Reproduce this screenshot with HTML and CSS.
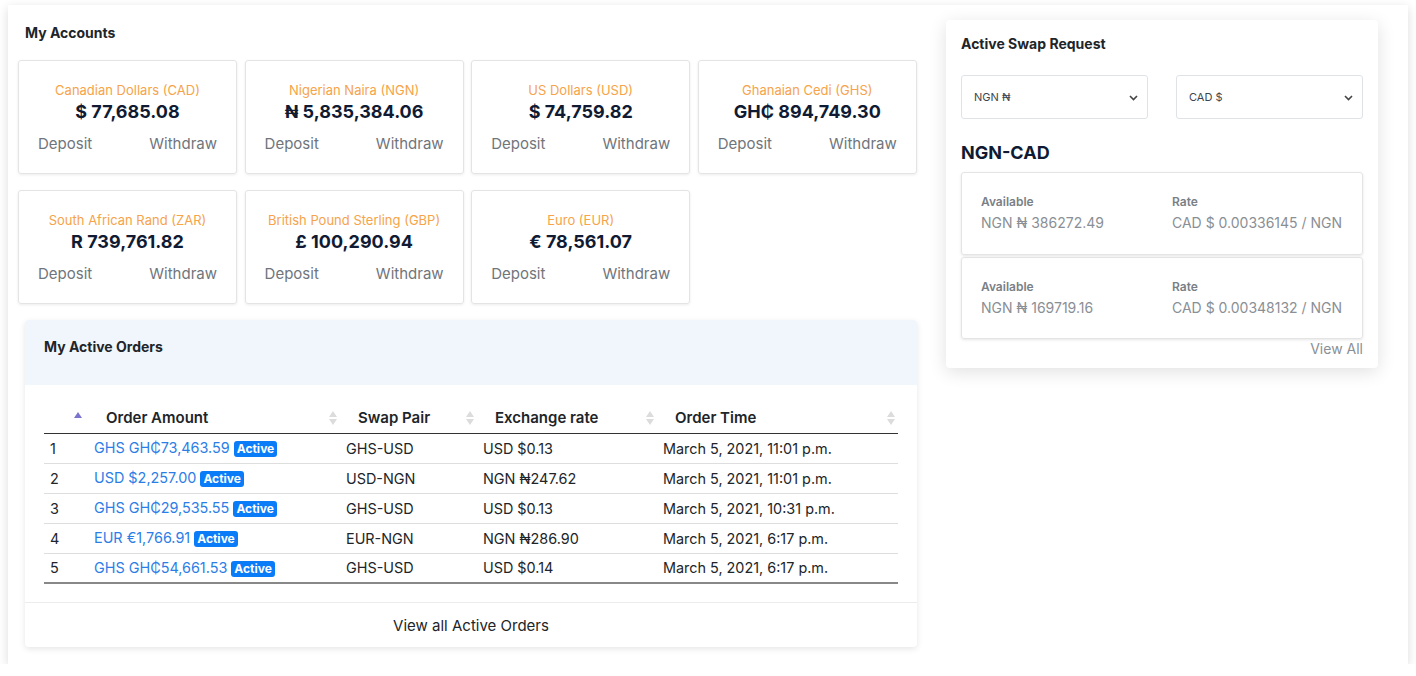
FILE: index.html
```html
<!DOCTYPE html>
<html>
<head>
<meta charset="utf-8">
<link rel="stylesheet" href="styles.css">
</head>
<body>
<div class="page">
  <div class="left">
    <h2 class="section-title">My Accounts</h2>
    <div class="accounts">
      <div class="acct"><div class="acct-name">Canadian Dollars (CAD)</div><div class="acct-amt">$ 77,685.08</div><div class="acct-actions"><span>Deposit</span><span>Withdraw</span></div></div>
      <div class="acct"><div class="acct-name">Nigerian Naira (NGN)</div><div class="acct-amt">₦ 5,835,384.06</div><div class="acct-actions"><span>Deposit</span><span>Withdraw</span></div></div>
      <div class="acct"><div class="acct-name">US Dollars (USD)</div><div class="acct-amt">$ 74,759.82</div><div class="acct-actions"><span>Deposit</span><span>Withdraw</span></div></div>
      <div class="acct"><div class="acct-name">Ghanaian Cedi (GHS)</div><div class="acct-amt">GH₵ 894,749.30</div><div class="acct-actions"><span>Deposit</span><span>Withdraw</span></div></div>
      <div class="acct"><div class="acct-name">South African Rand (ZAR)</div><div class="acct-amt">R 739,761.82</div><div class="acct-actions"><span>Deposit</span><span>Withdraw</span></div></div>
      <div class="acct"><div class="acct-name">British Pound Sterling (GBP)</div><div class="acct-amt">£ 100,290.94</div><div class="acct-actions"><span>Deposit</span><span>Withdraw</span></div></div>
      <div class="acct"><div class="acct-name">Euro (EUR)</div><div class="acct-amt">€ 78,561.07</div><div class="acct-actions"><span>Deposit</span><span>Withdraw</span></div></div>
    </div>

    <div class="orders">
      <div class="orders-head">My Active Orders</div>
      <div class="orders-body">
        <table class="tbl">
          <thead>
            <tr>
              <th class="c0"><span class="sort sort-up"><svg width="8" height="6" viewBox="0 0 8 6"><path d="M0 6 L4 0 L8 6 Z" fill="#7b74cf"/></svg></span></th>
              <th class="c1">Order Amount<span class="sort"><svg width="8" height="14" viewBox="0 0 8 14"><path d="M0 6 L4 0 L8 6 Z M0 8 L4 14 L8 8 Z" fill="#dcdcdc"/></svg></span></th>
              <th class="c2">Swap Pair<span class="sort"><svg width="8" height="14" viewBox="0 0 8 14"><path d="M0 6 L4 0 L8 6 Z M0 8 L4 14 L8 8 Z" fill="#dcdcdc"/></svg></span></th>
              <th class="c3">Exchange rate<span class="sort"><svg width="8" height="14" viewBox="0 0 8 14"><path d="M0 6 L4 0 L8 6 Z M0 8 L4 14 L8 8 Z" fill="#dcdcdc"/></svg></span></th>
              <th class="c4">Order Time<span class="sort"><svg width="8" height="14" viewBox="0 0 8 14"><path d="M0 6 L4 0 L8 6 Z M0 8 L4 14 L8 8 Z" fill="#dcdcdc"/></svg></span></th>
            </tr>
          </thead>
          <tbody>
            <tr><td>1</td><td><a class="amt">GHS GH₵73,463.59</a> <span class="badge">Active</span></td><td>GHS-USD</td><td>USD $0.13</td><td>March 5, 2021, 11:01 p.m.</td></tr>
            <tr><td>2</td><td><a class="amt">USD $2,257.00</a> <span class="badge">Active</span></td><td>USD-NGN</td><td>NGN ₦247.62</td><td>March 5, 2021, 11:01 p.m.</td></tr>
            <tr><td>3</td><td><a class="amt">GHS GH₵29,535.55</a> <span class="badge">Active</span></td><td>GHS-USD</td><td>USD $0.13</td><td>March 5, 2021, 10:31 p.m.</td></tr>
            <tr><td>4</td><td><a class="amt">EUR €1,766.91</a> <span class="badge">Active</span></td><td>EUR-NGN</td><td>NGN ₦286.90</td><td>March 5, 2021, 6:17 p.m.</td></tr>
            <tr><td>5</td><td><a class="amt">GHS GH₵54,661.53</a> <span class="badge">Active</span></td><td>GHS-USD</td><td>USD $0.14</td><td>March 5, 2021, 6:17 p.m.</td></tr>
          </tbody>
        </table>
      </div>
      <div class="orders-foot">View all Active Orders</div>
    </div>
  </div>

  <div class="right">
    <div class="swap">
      <h2 class="section-title">Active Swap Request</h2>
      <div class="selects">
        <div class="sel"><select><option>NGN ₦</option></select><svg class="chev" width="9" height="6" viewBox="0 0 9 6"><path d="M1 1 L4.5 4.5 L8 1" fill="none" stroke="#444" stroke-width="1.6"/></svg></div>
        <div class="sel"><select><option>CAD $</option></select><svg class="chev" width="9" height="6" viewBox="0 0 9 6"><path d="M1 1 L4.5 4.5 L8 1" fill="none" stroke="#444" stroke-width="1.6"/></svg></div>
      </div>
      <div class="pair">NGN-CAD</div>
      <div class="offer">
        <div><div class="lbl">Available</div><div class="val">NGN ₦ 386272.49</div></div>
        <div><div class="lbl">Rate</div><div class="val">CAD $ 0.00336145 / NGN</div></div>
      </div>
      <div class="offer">
        <div><div class="lbl">Available</div><div class="val">NGN ₦ 169719.16</div></div>
        <div><div class="lbl">Rate</div><div class="val">CAD $ 0.00348132 / NGN</div></div>
      </div>
      <div class="viewall">View All</div>
    </div>
  </div>
</div>
</body>
</html>
```

FILE: styles.css
```css
* { box-sizing: border-box; }
body {
  margin: 0;
  background: #ffffff;
  font-family: "Inter", "Noto Sans", sans-serif;
  color: #212529;
}
.page {
  margin: 5px 8px 0 8px;
  width: 1400px;
  height: 659px;
  background: #fff;
  box-shadow: 0 3px 10px rgba(0,0,0,0.14);
  display: flex;
  padding: 0 0 0 10px;
}
.left {
  width: 900px;
  padding-top: 20px;
}
.section-title {
  margin: 0;
  font-family: "Inter", sans-serif;
  font-weight: 700;
  font-size: 14px;
  line-height: 16px;
  color: #212529;
}
.left > .section-title { padding-left: 7px; margin-bottom: 19px; }
.accounts {
  display: grid;
  grid-template-columns: repeat(4, 219px);
  column-gap: 7.6px;
  row-gap: 16px;
}
.acct {
  height: 114px;
  border: 1px solid #e4e4e4;
  border-radius: 3px;
  box-shadow: 0 1px 3px rgba(0,0,0,0.08);
  padding: 20px 19px 0 19px;
  text-align: center;
}
.acct-name {
  font-size: 13px;
  line-height: 18px;
  color: #f6a34a;
}
.acct-amt {
  font-size: 18px;
  line-height: 26px;
  font-weight: 700;
  color: #101b33;
}
.acct-actions {
  margin-top: 8px;
  display: flex;
  justify-content: space-between;
  font-size: 15px;
  line-height: 22px;
  color: #70757c;
}
.orders {
  margin: 16px 0 0 7px;
  width: 892px;
  border-radius: 4px;
  box-shadow: 0 2px 6px rgba(0,0,0,0.10);
  background: #fff;
}
.orders-head {
  height: 65px;
  background: #f1f6fd;
  padding: 19px 19px 0 19px;
  font-weight: 700;
  font-size: 14px;
  line-height: 16px;
  color: #212529;
  border-radius: 4px 4px 0 0;
}
.orders-body {
  padding: 17px 19px 18px 19px;
  border-bottom: 1px solid #ececec;
}
.tbl {
  width: 854px;
  border-collapse: collapse;
  font-size: 14px;
}
.tbl th {
  position: relative;
  text-align: left;
  font-weight: 600;
  font-size: 15px;
  height: 31px;
  padding: 0 0 0 18px;
  border-bottom: 1px solid #333;
  white-space: nowrap;
}
.tbl th.c0 { width: 44px; }
.tbl th.c1 { width: 252px; }
.tbl th.c2 { width: 137px; }
.tbl th.c3 { width: 180px; }
.sort {
  position: absolute;
  right: 3px;
  top: 9px;
  line-height: 0;
}
.sort-up { top: 10px; right: 6px; }
.tbl td {
  height: 30px;
  padding: 0 0 0 6px;
  border-bottom: 1px solid #dedede;
  white-space: nowrap;
  font-size: 14.4px;
}
.tbl tbody tr:last-child td { border-bottom: 2px solid #888; }
.amt { color: #2b7ee6; text-decoration: none; }
.badge {
  display: inline-block;
  background: #0a7cf8;
  color: #fff;
  font-weight: 700;
  font-size: 12px;
  line-height: 16px;
  padding: 0 3px;
  border-radius: 3px;
  vertical-align: 0;
}
.orders-foot {
  height: 44px;
  display: flex;
  align-items: center;
  justify-content: center;
  font-size: 15px;
  color: #212529;
}
.right {
  margin-left: 28px;
  padding-top: 15px;
}
.swap {
  width: 432px;
  background: #fff;
  border-radius: 4px;
  box-shadow: 0 4px 18px rgba(0,0,0,0.12);
  padding: 15px 15px 9px 15px;
}
.swap .section-title { line-height: 18px; }
.selects {
  margin-top: 22px;
  display: flex;
  justify-content: space-between;
}
.sel {
  position: relative;
  width: 187px;
  height: 44px;
}
.sel select {
  appearance: none;
  -webkit-appearance: none;
  width: 100%;
  height: 100%;
  border: 1px solid #dfe3e8;
  border-radius: 3px;
  background: #fff;
  font-family: "Inter", sans-serif;
  font-size: 11px;
  color: #3d4650;
  padding: 0 12px;
}
.chev {
  position: absolute;
  right: 10px;
  top: 20px;
  pointer-events: none;
}
.pair {
  margin-top: 22px;
  font-size: 18px;
  line-height: 24px;
  font-weight: 700;
  color: #101b33;
}
.offer {
  margin-top: 7px;
  height: 83px;
  border: 1px solid #e4e4e4;
  border-radius: 3px;
  box-shadow: 0 1px 3px rgba(0,0,0,0.10);
  padding: 21px 19px 0 19px;
  display: grid;
  grid-template-columns: 191px 1fr;
}
.offer + .offer { margin-top: 2px; height: 82px; }
.lbl {
  font-size: 12px;
  line-height: 16px;
  font-weight: 600;
  color: #7a7f86;
}
.val {
  margin-top: 2px;
  font-size: 14px;
  line-height: 22px;
  color: #8a8f95;
}
.viewall {
  text-align: right;
  font-size: 14px;
  line-height: 20px;
  color: #8a8f95;
}
```
